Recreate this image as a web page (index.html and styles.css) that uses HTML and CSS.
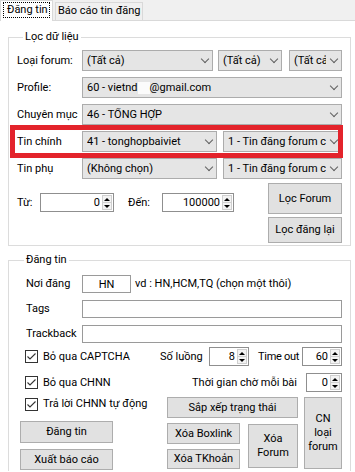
FILE: index.html
```html
<!DOCTYPE html>
<html>
<head>
    <meta charset="utf-8">
    <title>Đăng tin</title>
    <link rel="stylesheet" href="styles.css">
</head>
<body>
<div class="tabs">
    <div class="tab on"><span class="focus">Đăng tin</span></div>
    <div class="tab">Báo cáo tin đăng</div>
</div>
<div class="page">
    <fieldset class="grp loc">
        <legend>Lọc dữ liệu</legend>
        <div class="row">
            <span class="lb">Loại forum:</span>
            <div class="cb c1"><span>(Tất cả)</span></div>
            <div class="cb c2"><span>(Tất cả)</span></div>
            <div class="cb c3"><span>(Tất cả)</span></div>
        </div>
        <div class="row">
            <span class="lb">Profile:</span>
            <div class="cb full"><span>60 - vietnd<i class="blur"></i>@gmail.com</span></div>
        </div>
        <div class="row">
            <span class="lb">Chuyên mục</span>
            <div class="cb full"><span>46 - TỔNG HỢP</span></div>
        </div>
        <div class="row hot">
            <span class="lb">Tin chính</span>
            <div class="cb h1"><span>41 - tonghopbaiviet</span></div>
            <div class="cb h2"><span>1 - Tin đăng forum chính</span></div>
            <div class="mark"></div>
        </div>
        <div class="row">
            <span class="lb">Tin phụ</span>
            <div class="cb h1"><span>(Không chọn)</span></div>
            <div class="cb h2"><span>1 - Tin đăng forum chính</span></div>
        </div>
        <div class="range">
            <div class="from">
                <span class="tu">Từ:</span>
                <div class="num n1"><span>0</span><i class="spin"><b class="up"></b><b class="dn"></b></i></div>
                <span class="den">Đến:</span>
                <div class="num n2"><span>100000</span><i class="spin"><b class="up"></b><b class="dn"></b></i></div>
            </div>
            <div class="btns">
                <button class="btn big">Lọc Forum</button>
                <button class="btn small">Lọc đăng lại</button>
            </div>
        </div>
    </fieldset>

    <fieldset class="grp post">
        <legend>Đăng tin</legend>
        <div class="lines">
            <div class="line">
                <span class="lb2">Nơi đăng</span>
                <input class="tb hn" type="text" value="HN">
                <span class="hint">vd : HN,HCM,TQ (chọn một thôi)</span>
            </div>
            <div class="line">
                <span class="lb2">Tags</span>
                <input class="tb wide" type="text">
            </div>
            <div class="line">
                <span class="lb2">Trackback</span>
                <input class="tb wide" type="text">
            </div>
        </div>
        <div class="opt o1">
            <label class="chk"><svg width="13" height="13" viewBox="0 0 13 13"><rect x="0.5" y="0.5" width="12" height="12" fill="#fff" stroke="#333"/><path d="M2.5 6.5 L5 9 L10.5 3.5" fill="none" stroke="#333" stroke-width="1.1"/></svg>Bỏ qua CAPTCHA</label>
            <span class="sl">Số luồng</span>
            <div class="num n3"><span>8</span><i class="spin"><b class="up"></b><b class="dn"></b></i></div>
            <span class="to">Time out</span>
            <div class="num n3"><span>60</span><i class="spin"><b class="up"></b><b class="dn"></b></i></div>
        </div>
        <div class="opt o2">
            <label class="chk"><svg width="13" height="13" viewBox="0 0 13 13"><rect x="0.5" y="0.5" width="12" height="12" fill="#fff" stroke="#333"/><path d="M2.5 6.5 L5 9 L10.5 3.5" fill="none" stroke="#333" stroke-width="1.1"/></svg>Bỏ qua CHNN</label>
            <span class="wait">Thời gian chờ mỗi bài</span>
            <div class="num n4"><span>0</span><i class="spin"><b class="up"></b><b class="dn"></b></i></div>
        </div>
        <div class="acts">
            <label class="chk auto"><svg width="13" height="13" viewBox="0 0 13 13"><rect x="0.5" y="0.5" width="12" height="12" fill="#fff" stroke="#333"/><path d="M2.5 6.5 L5 9 L10.5 3.5" fill="none" stroke="#333" stroke-width="1.1"/></svg>Trả lời CHNN tự động</label>
            <button class="btn sort">Sắp xếp trạng thái</button>
            <button class="btn cn">CN<br>loại<br>forum</button>
            <button class="btn post1">Đăng tin</button>
            <button class="btn box">Xóa Boxlink</button>
            <button class="btn xf">Xóa<br>Forum</button>
            <button class="btn exp">Xuất báo cáo</button>
            <button class="btn tk">Xóa TKhoản</button>
        </div>
    </fieldset>
</div>
</body>
</html>
```

FILE: styles.css
```css
*{
    margin: 0;
    padding: 0;
    box-sizing: border-box;
}
body{
    width: 355px;
    height: 472px;
    overflow: hidden;
    background: #ffffff;
    font-family: Roboto, "Noto Sans", sans-serif;
    font-size: 11px;
    line-height: 14px;
    color: #000000;
    white-space: nowrap;
}
.tabs{
    display: flex;
    align-items: flex-end;
    height: 21px;
    background: #f0f0f0;
    border-bottom: 1px solid #d9d9d9;
}
.tab{
    width: 88px;
    height: 18px;
    margin-left: 2px;
    padding: 1px 0 0 2px;
    border: 1px solid #d9d9d9;
    border-bottom: none;
    background: #f0f0f0;
}
.tab.on{
    position: relative;
    width: 53px;
    height: 21px;
    margin: 0 0 -1px 0;
    padding: 1px 2px 0 2px;
    background: #ffffff;
}
.focus{
    display: block;
    width: 47px;
    height: 16px;
    padding: 0 3px;
    line-height: 14px;
    border: 1px dotted #000000;
}
.grp{
    border: 1px solid #dcdcdc;
    margin: 0 4px 0 8px;
    min-width: 0;
}
.grp legend{
    padding: 0 2px;
    line-height: 14px;
}
.loc{
    margin-top: 9px;
    padding: 6px 8px 2px 8px;
}
.loc legend{
    margin-left: 6px;
}
.row{
    display: flex;
    align-items: center;
    height: 21px;
    margin-bottom: 6px;
}
.lb{
    width: 65px;
    flex: none;
}
.cb{
    display: flex;
    align-items: center;
    height: 21px;
    padding-left: 4px;
    background: #e5e5e5;
    border: 1px solid #acacac;
    flex: none;
}
.cb span{
    flex: 1;
    overflow: hidden;
}
.cb::after{
    content: "";
    flex: none;
    width: 5px;
    height: 5px;
    margin: -3px 4px 0 5px;
    border-right: 1px solid #606060;
    border-bottom: 1px solid #606060;
    transform: rotate(45deg);
}
.c1{ width: 131px; }
.c2{ width: 64px; margin-left: 5px; }
.c3{ width: 53px; margin-left: 7px; }
.full{ flex: 1; }
.h1{ width: 135px; }
.h2{ width: 119px; margin-left: 6px; }
.blur{
    display: inline-block;
    width: 12px;
    height: 12px;
    vertical-align: middle;
    background: #fbfbfb;
}
.hot{
    position: relative;
}
.mark{
    position: absolute;
    left: -7px;
    right: -1px;
    top: -6px;
    bottom: -6px;
    border: 5px solid #e3232b;
}
.range{
    display: flex;
    margin-top: -2px;
}
.from{
    display: flex;
    align-items: center;
    height: 19px;
    margin-top: 10px;
}
.tu{ width: 23px; }
.den{ width: 34px; margin-left: 14px; }
.num{
    display: flex;
    align-items: center;
    height: 19px;
    background: #ffffff;
    border: 1px solid #8f8f8f;
    flex: none;
}
.num span{
    flex: 1;
    text-align: right;
    padding-right: 1px;
}
.n1{ width: 74px; }
.n2{ width: 72px; }
.n3{ width: 40px; }
.n4{ width: 36px; }
.spin{
    display: flex;
    flex-direction: column;
    width: 10px;
    height: 15px;
    margin: 0 1px;
}
.spin b{
    flex: 1;
    display: flex;
    align-items: center;
    justify-content: center;
    border: 1px solid #cfcfcf;
    background: #f3f3f3;
}
.spin .dn{
    border-top: none;
}
.spin .up::after{
    content: "";
    border-left: 3px solid transparent;
    border-right: 3px solid transparent;
    border-bottom: 3px solid #000000;
}
.spin .dn::after{
    content: "";
    border-left: 3px solid transparent;
    border-right: 3px solid transparent;
    border-top: 3px solid #000000;
}
.btns{
    display: flex;
    flex-direction: column;
    gap: 3px;
    width: 74px;
    margin-left: auto;
}
.btn{
    font-family: inherit;
    font-size: 11px;
    line-height: 14px;
    color: #000000;
    background: #e1e1e1;
    border: 1px solid #adadad;
}
.big{ height: 31px; }
.small{ height: 26px; }
.post{
    margin-top: 7px;
    padding: 8px 8px 0 11px;
    border-bottom: none;
}
.post legend{
    margin-left: 4px;
}
.lines{
    display: flex;
    flex-direction: column;
    gap: 7px;
    margin-bottom: 4px;
}
.line{
    display: flex;
    align-items: center;
    height: 18px;
}
.lb2{
    width: 56px;
    margin-left: 6px;
    flex: none;
}
.tb{
    height: 18px;
    padding: 0 3px;
    font-family: inherit;
    font-size: 11px;
    border: 1px solid #9a9a9a;
    background: #ffffff;
    outline: none;
}
.hn{
    width: 49px;
    text-align: center;
}
.wide{
    flex: 1;
}
.hint{
    margin-left: 4px;
}
.opt{
    display: flex;
    align-items: center;
    height: 19px;
}
.o1{ margin-bottom: 7px; }
.o2{ margin-bottom: 5px; }
.chk{
    display: flex;
    align-items: center;
    gap: 5px;
    margin-left: 5px;
}
.chk svg{
    flex: none;
}
.o1 .chk{ width: 135px; }
.sl{ width: 49px; }
.to{ width: 44px; margin-left: 9px; letter-spacing: -0.3px; }
.wait{ margin-left: auto; margin-right: 9px; }
.acts{
    display: grid;
    grid-template-columns: 93px 54px 73px 8px 50px 6px 38px;
    grid-template-rows: 24px 28px 22px;
}
.auto{ grid-column: 1 / 3; grid-row: 1; align-self: start; }
.sort{ grid-column: 3 / 6; grid-row: 1; height: 21px; }
.cn{ grid-column: 7; grid-row: 1 / 4; height: 72px; }
.post1{ grid-column: 1; grid-row: 2; height: 22px; }
.box{ grid-column: 3; grid-row: 2; height: 21px; margin-top: 2px; }
.xf{ grid-column: 5; grid-row: 2 / 4; height: 44px; margin-top: 3px; }
.exp{ grid-column: 1; grid-row: 3; height: 21px; }
.tk{ grid-column: 3; grid-row: 3; height: 20px; }
```
